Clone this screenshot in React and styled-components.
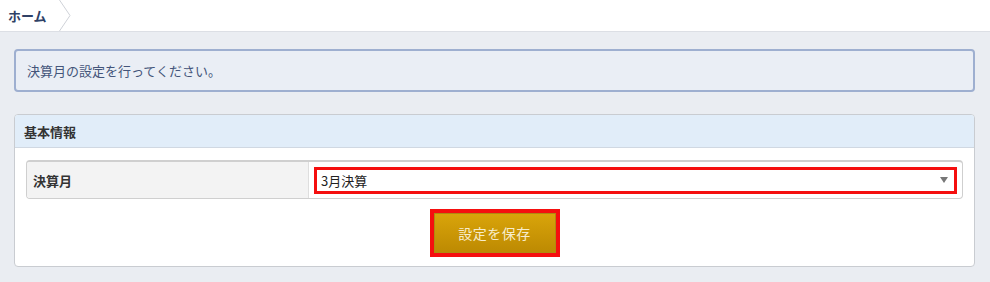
import React from 'react';
import styled, { createGlobalStyle } from 'styled-components';

const Global = createGlobalStyle`
  html, body {
    margin: 0;
    padding: 0;
    background: #eaedf2;
    font-family: "Noto Sans CJK JP", "Noto Sans", sans-serif;
    font-size: 13px;
    color: #333;
  }
`;

const TopBar = styled.div`
  height: 31px;
  background: #fff;
  border-bottom: 1px solid #dcdfe5;
  display: flex;
  align-items: stretch;
`;

const Crumb = styled.a`
  display: flex;
  align-items: center;
  padding: 0 12px 0 8px;
  font-weight: bold;
  font-size: 13px;
  color: #2f4166;
  text-decoration: none;
`;

const Chevron = styled.svg`
  width: 12px;
  height: 31px;
  display: block;
`;

const Main = styled.div`
  padding: 17px 15px 16px 14px;
  display: flex;
  flex-direction: column;
  gap: 22px;
`;

const Notice = styled.div`
  height: 39px;
  border: 2px solid #9eafd0;
  border-radius: 4px;
  background: #eaeef5;
  display: flex;
  align-items: center;
  padding: 0 11px;
  color: #44557a;
  font-size: 13px;
`;

const Panel = styled.div`
  border: 1px solid #c9ccd1;
  border-radius: 4px;
  background: #fff;
  overflow: hidden;
`;

const PanelHead = styled.div`
  height: 32px;
  background: #e1edf9;
  border-bottom: 1px solid #d0d8e2;
  display: flex;
  align-items: center;
  padding: 0 9px;
  font-weight: bold;
  color: #333;
`;

const PanelBody = styled.div`
  padding: 12px 11px 9px;
  display: flex;
  flex-direction: column;
  align-items: center;
  gap: 10px;
`;

const Table = styled.div`
  align-self: stretch;
  display: grid;
  grid-template-columns: 282px 1fr;
  height: 36px;
  border: 1px solid #cfcfcf;
  border-top: 2px solid #cfcfcf;
  border-radius: 4px;
  overflow: hidden;
`;

const Label = styled.div`
  background: #f3f3f3;
  border-right: 1px solid #dedede;
  display: flex;
  align-items: center;
  padding: 0 6px;
  font-weight: bold;
  color: #333;
`;

const Value = styled.div`
  display: flex;
  align-items: center;
  padding: 0 5px;
`;

const Select = styled.div`
  flex: 1;
  height: 21px;
  border: 3px solid #f50f0f;
  display: flex;
  align-items: center;
  justify-content: space-between;
  padding: 0 6px 0 4px;
  color: #222;
  font-size: 13px;
`;

const Arrow = styled.span`
  width: 0;
  height: 0;
  border-left: 4px solid transparent;
  border-right: 4px solid transparent;
  border-top: 6px solid #777;
`;

const Highlight = styled.div`
  border: 4px solid #f50f0f;
`;

const SaveButton = styled.button`
  box-sizing: border-box;
  width: 122px;
  height: 40px;
  border: 1px solid #b08a10;
  background: linear-gradient(#d9a40a, #bd8a02);
  color: #f7edcc;
  font-family: inherit;
  font-size: 14px;
  letter-spacing: 0.5px;
  display: block;
  cursor: pointer;
`;

export default function App() {
  return (
    <>
      <Global />
      <TopBar>
        <Crumb href="#">ホーム</Crumb>
        <Chevron viewBox="0 0 12 31">
          <path d="M0.5 0 L11 15.5 L0.5 31" fill="none" stroke="#cfd2d8" strokeWidth="1" />
        </Chevron>
      </TopBar>
      <Main>
        <Notice>決算月の設定を行ってください。</Notice>
        <Panel>
          <PanelHead>基本情報</PanelHead>
          <PanelBody>
            <Table>
              <Label>決算月</Label>
              <Value>
                <Select>
                  <span>3月決算</span>
                  <Arrow />
                </Select>
              </Value>
            </Table>
            <Highlight>
              <SaveButton>設定を保存</SaveButton>
            </Highlight>
          </PanelBody>
        </Panel>
      </Main>
    </>
  );
}
